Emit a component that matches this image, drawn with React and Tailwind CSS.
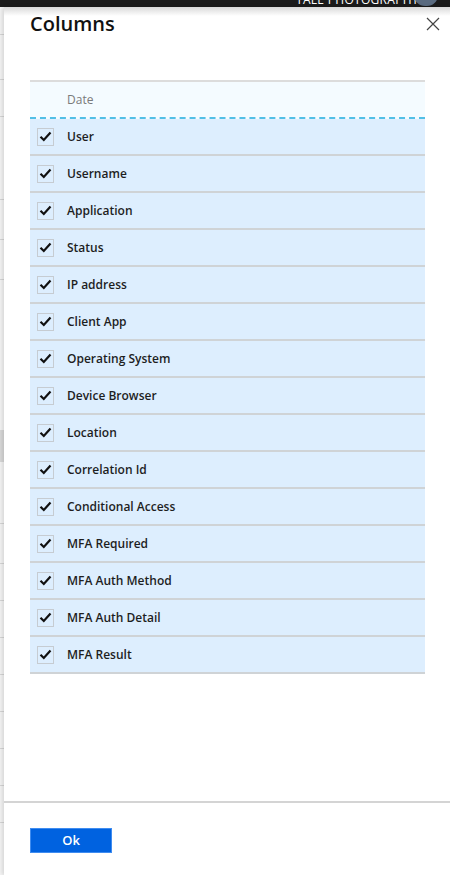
import React, { useState } from 'react';

const COLUMNS = [
  'User',
  'Username',
  'Application',
  'Status',
  'IP address',
  'Client App',
  'Operating System',
  'Device Browser',
  'Location',
  'Correlation Id',
  'Conditional Access',
  'MFA Required',
  'MFA Auth Method',
  'MFA Auth Detail',
  'MFA Result',
];

const font = { fontFamily: '"Open Sans", "Noto Sans", sans-serif' };

const CheckBox = ({ checked }) => (
  <span className="w-[17px] h-[18px] border border-[#c6ccd2] flex items-center justify-center shrink-0">
    {checked && (
      <svg width="13" height="11" viewBox="0 0 13 11">
        <path d="M1.5 5.8 L4.8 9 L11.5 1.6" fill="none" stroke="#111" strokeWidth="2.2" />
      </svg>
    )}
  </span>
);

const App = () => {
  const [checked, setChecked] = useState(COLUMNS.map(() => true));

  const toggle = (i) => setChecked(checked.map((c, idx) => (idx === i ? !c : c)));

  return (
    <div className="w-[450px] h-[875px] bg-white flex flex-col overflow-hidden" style={font}>
      {/* top bar, cut off */}
      <div className="h-[7px] bg-[#1b1b1b] relative overflow-hidden shrink-0">
        <span className="absolute left-[296px] top-[-9px] text-[12px] text-white tracking-wide">
          TALE PHOTOGRAPHY
        </span>
        <span className="absolute left-[414px] top-[-16px] w-[24px] h-[22px] rounded-full bg-[#5a6b80]" />
      </div>

      <div className="flex flex-1">
        {/* page behind the blade */}
        <div className="w-[4px] bg-[#f4f4f4] flex flex-col shrink-0">
          <div className="h-[28px] border-b border-[#d6d6d6]" />
          <div className="h-[45px] border-b border-[#d6d6d6]" />
          <div className="h-[37px] border-b border-[#d6d6d6]" />
          <div className="h-[83px] border-b border-[#d6d6d6]" />
          <div className="h-[40px] border-b border-[#d6d6d6]" />
          <div className="h-[40px] border-b border-[#d6d6d6]" />
          <div className="h-[150px]" />
          <div className="h-[32px] bg-[#d8d8d8]" />
          <div className="h-[62px] border-b border-[#d6d6d6]" />
          <div className="h-[40px] border-b border-[#d6d6d6]" />
          <div className="h-[37px] border-b border-[#d6d6d6]" />
          <div className="h-[37px] border-b border-[#d6d6d6]" />
          <div className="h-[37px] border-b border-[#d6d6d6]" />
          <div className="h-[37px] border-b border-[#d6d6d6]" />
          <div className="h-[37px] border-b border-[#d6d6d6]" />
          <div className="h-[37px] border-b border-[#d6d6d6]" />
          <div className="h-[37px] border-b border-[#d6d6d6]" />
        </div>

        {/* columns blade */}
        <div className="flex-1 flex flex-col bg-white shadow-[-2px_0_4px_rgba(0,0,0,0.12)] relative">
          <div className="absolute left-0 right-0 top-0 h-[9px] bg-gradient-to-b from-[#d9d9d9] to-white" />

          <div className="relative flex items-start justify-between pl-[26px] pr-[8px]">
            <h1 className="text-[20px] leading-[34px] font-semibold text-[#111]">Columns</h1>
            <button className="mt-[8px] p-[2px]">
              <svg width="14" height="14" viewBox="0 0 14 14">
                <path d="M1 1 L13 13 M13 1 L1 13" stroke="#444" strokeWidth="1.2" />
              </svg>
            </button>
          </div>

          <div className="ml-[26px] mr-[25px] mt-[39px] border-t-2 border-[#dcdcdc]">
            <div className="h-[37px] bg-[#f4fbff] flex items-center pl-[37px] text-[12px] text-[#7a7a7a] border-b-2 border-dashed border-[#52bfe6]">
              Date
            </div>
            {COLUMNS.map((name, i) => (
              <div
                key={name}
                onClick={() => toggle(i)}
                className="h-[37px] bg-[#ddeefe] border-b-2 border-[#cfd3d6] flex items-center gap-[13px] pl-[7px] text-[12px] font-semibold text-[#1e1e1e] cursor-pointer"
              >
                <CheckBox checked={checked[i]} />
                <span>{name}</span>
              </div>
            ))}
          </div>

          <div className="flex-1" />

          <div className="border-t-2 border-[#d4d4d4] h-[74px] pl-[26px] pt-[25px]">
            <button className="w-[82px] h-[25px] bg-[#0062e0] border border-[#3f8cf0] text-white text-[13px] font-semibold flex items-center justify-center">
              Ok
            </button>
          </div>
        </div>
      </div>
    </div>
  );
};

export default App;
